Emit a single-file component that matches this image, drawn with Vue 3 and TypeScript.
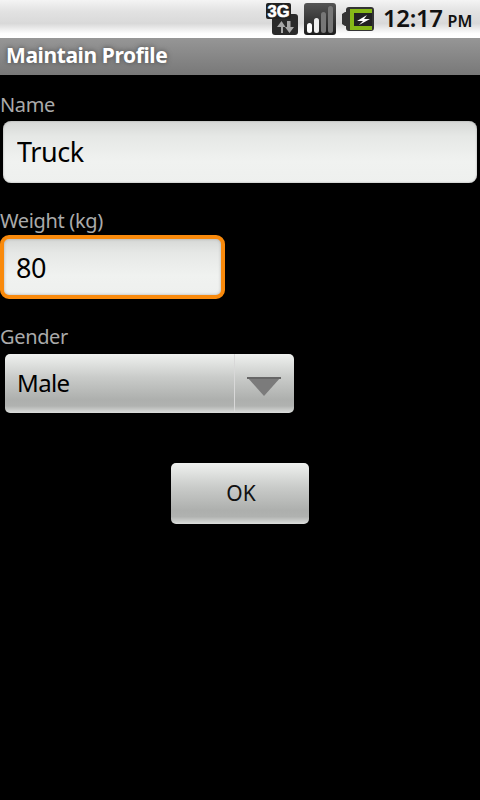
<script setup lang="ts">
import { ref } from 'vue'
const name = ref('Truck')
const weight = ref('80')
</script>

<template>
  <div class="screen">
    <header class="status">
      <svg class="net" width="32" height="32" viewBox="0 0 32 32">
        <rect x="6" y="11" width="26" height="21" rx="3" fill="#2a2a2a" />
        <rect x="0" y="0" width="25" height="16" rx="2" fill="#222" />
        <text x="1.500" y="14" class="net-text" textLength="22" lengthAdjust="spacingAndGlyphs">3G</text>
        <path d="M15 30v-6h-4l4.500-6 4 6h-2.500v6z" fill="#a8a8a8" />
        <path d="M21 18h3.500v6H28l-4.500 6-4.500-6h2z" fill="#a8a8a8" />
      </svg>
      <svg class="signal" width="32" height="32" viewBox="0 0 32 32">
        <defs>
          <linearGradient id="sigbg" x1="0" y1="0" x2="0" y2="1">
            <stop offset="0" stop-color="#555" />
            <stop offset="1" stop-color="#1c1c1c" />
          </linearGradient>
        </defs>
        <rect width="32" height="32" rx="3" fill="url(#sigbg)" />
        <rect x="3" y="20" width="5" height="10" rx="2.500" fill="#fff" />
        <rect x="10" y="15" width="5" height="15" rx="2.500" fill="#eee" />
        <rect x="17" y="9" width="5" height="21" rx="2.500" fill="#777" />
        <rect x="24" y="3" width="5" height="27" rx="2.500" fill="#777" />
      </svg>
      <svg class="battery" width="32" height="24" viewBox="0 0 32 24">
        <path d="M0 7l3-2h1V3a3 3 0 0 1 3-3h22a3 3 0 0 1 3 3v18a3 3 0 0 1-3 3H7a3 3 0 0 1-3-3v-2H3l-3-2z" fill="#333" />
        <path d="M8 2h22v4H12v13h18v4H8z" fill="#86b817" />
        <rect x="12" y="6" width="18" height="13" fill="#222" />
        <path d="M25 8l-10 6h6l-4 4 11-6h-6z" fill="#fff" />
      </svg>
      <div class="clock">12:17<span class="ampm">PM</span></div>
    </header>

    <h1 class="title">Maintain Profile</h1>

    <main class="form">
      <label class="label">Name</label>
      <input v-model="name" class="field field-name" type="text" />

      <label class="label label-weight">Weight (kg)</label>
      <input v-model="weight" class="field field-weight" type="text" />

      <label class="label label-gender">Gender</label>
      <div class="spinner">
        <span class="spinner-value">Male</span>
        <span class="spinner-arrow"></span>
      </div>

      <button class="ok" type="button">OK</button>
    </main>
  </div>
</template>

<style scoped>
.screen {
  width: 480px;
  height: 800px;
  background: #000;
  overflow: hidden;
  font-family: "Noto Sans", "Open Sans", sans-serif;
  display: flex;
  flex-direction: column;
}
.status {
  height: 38px;
  box-sizing: border-box;
  flex: none;
  display: flex;
  align-items: center;
  padding: 0 9px 0 266px;
  background: linear-gradient(#f4f4f4 0, #e2e2e2 30%, #d9d9d9 62%, #fdfdfd 88%, #ffffff 100%);
}
.net { flex: none; }
.net-text {
  font-family: "Liberation Sans", sans-serif;
  font-size: 17px;
  font-weight: 700;
  fill: #fff;
  stroke: #fff;
  stroke-width: 0.6px;
}
.signal { margin-left: 6px; flex: none; }
.battery { margin-left: 6px; flex: none; }
.clock {
  margin-left: 9px;
  font-size: 24px;
  font-weight: 600;
  letter-spacing: -0.4px;
  color: #111;
  white-space: nowrap;
  line-height: 1;
  margin-top: -3px;
}
.ampm {
  font-size: 16px;
  margin-left: 5px;
  letter-spacing: 0;
}
.title {
  height: 37px;
  flex: none;
  margin: 0;
  padding-left: 6px;
  background: linear-gradient(#969696, #787878);
  color: #fff;
  font-size: 21px;
  font-weight: 700;
  letter-spacing: -0.4px;
  line-height: 35px;
  text-shadow: 0 0 5px #444;
}
.form {
  display: flex;
  flex-direction: column;
  align-items: flex-start;
  padding-top: 16px;
}
.label {
  color: #aaa;
  font-size: 20px;
  letter-spacing: -0.35px;
  line-height: 28px;
  height: 28px;
}
.label-weight { margin-top: 24px; }
.label-gender { margin-top: 24px; }
.field {
  display: block;
  box-sizing: border-box;
  border: 0;
  outline: 0;
  margin: 2px 0 0;
  color: #000;
  font-family: inherit;
  font-size: 27px;
  letter-spacing: -0.4px;
  background: linear-gradient(#d6d8d6 0, #e6e8e6 25%, #f0f2f0 65%, #eef0ee 100%);
}
.field-name {
  width: 474px;
  height: 62px;
  margin-left: 3px;
  padding: 0 14px 2px;
  border-radius: 8px;
  box-shadow: inset 0 0 2px #999;
}
.field-weight {
  width: 225px;
  height: 64px;
  margin-top: 0;
  padding: 0 12px;
  border: 4px solid #f98a0c;
  border-radius: 9px;
  box-shadow: inset 0 0 3px #aaa;
}
.spinner {
  width: 289px;
  height: 59px;
  margin: 3px 0 0 5px;
  box-sizing: border-box;
  display: flex;
  border-radius: 5px;
  background: linear-gradient(#eff1ef 0, #c9cbc9 40%, #adafad 78%, #b0b2b0 88%, #dcdedc 100%);
  position: relative;
}
.spinner-value {
  flex: 1;
  padding-left: 12px;
  color: #000;
  font-size: 24px;
  letter-spacing: -0.6px;
  line-height: 57px;
  border-right: 1px solid #d8d8d8;
  margin-right: 59px;
}
.spinner-arrow {
  position: absolute;
  right: 13px;
  top: 23px;
  width: 0;
  height: 0;
  border-left: 17px solid transparent;
  border-right: 17px solid transparent;
  border-top: 19px solid #7b7b7b;
}
.spinner-arrow::before {
  content: "";
  position: absolute;
  left: -17px;
  top: -19px;
  width: 34px;
  height: 2px;
  background: #666;
}
.ok {
  align-self: flex-start;
  width: 138px;
  height: 61px;
  margin: 50px 0 0 171px;
  border: 0;
  border-radius: 5px;
  padding: 0 0 2px 2px;
  color: #111;
  font-family: inherit;
  font-size: 21px;
  background: linear-gradient(#eff1ef 0, #c9cbc9 40%, #adafad 78%, #b0b2b0 88%, #dcdedc 100%);
}
</style>
